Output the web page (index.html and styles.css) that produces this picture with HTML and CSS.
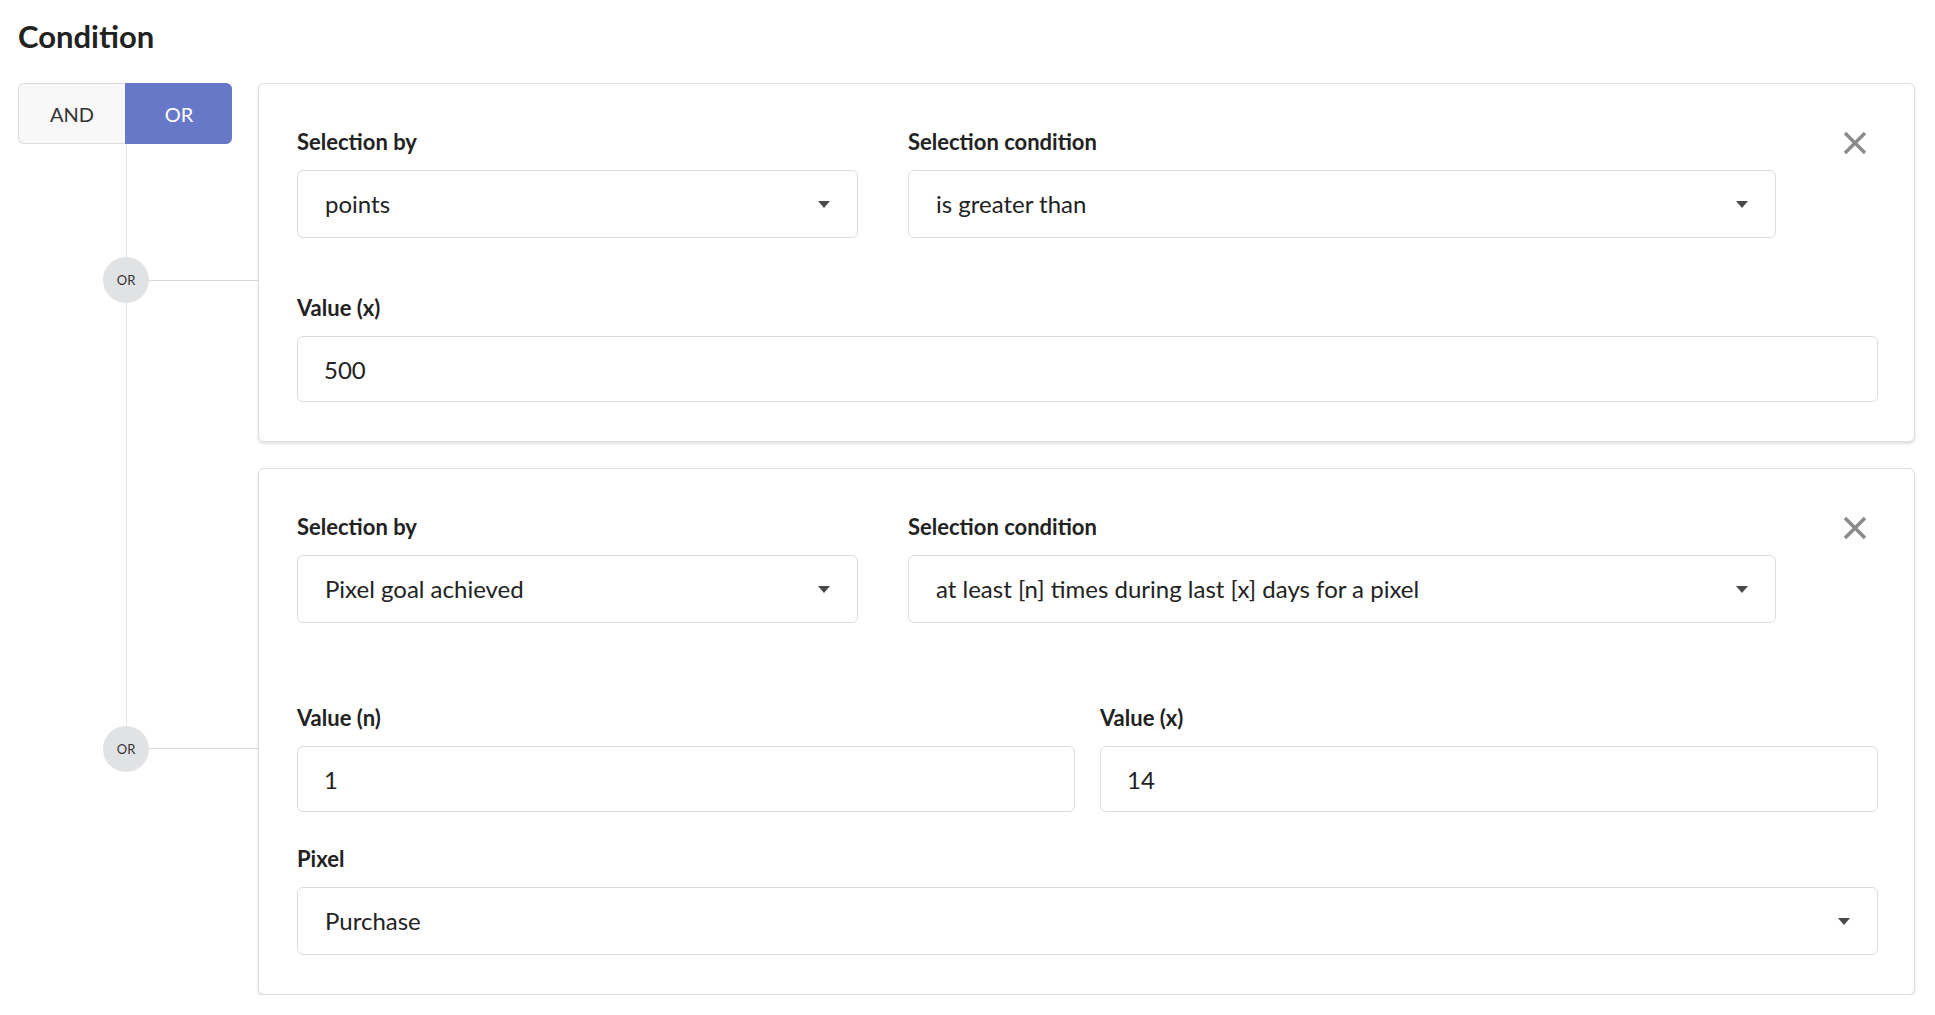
FILE: index.html
```html
<!DOCTYPE html>
<html lang="en">
<head>
  <meta charset="UTF-8">
  <title>Condition</title>
  <link rel="stylesheet" href="styles.css">
</head>
<body>

  <main class="page">
    <h1 class="title">Condition</h1>

    <div class="logic">

      <div class="item">
        <div class="rail first">
          <div class="toggle">
            <button class="toggle-btn" type="button">AND</button>
            <button class="toggle-btn active" type="button">OR</button>
          </div>
          <div class="stem"></div>
          <div class="node"><span class="node-dot">OR</span><span class="node-line"></span></div>
          <div class="stem stem-tail"></div>
        </div>

        <section class="card">
          <div class="row row-head">
            <div class="field">
              <label class="field-label">Selection by</label>
              <div class="select"><span>points</span><i class="caret"></i></div>
            </div>
            <div class="field">
              <label class="field-label">Selection condition</label>
              <div class="select"><span>is greater than</span><i class="caret"></i></div>
            </div>
            <button class="remove" type="button" aria-label="Remove">
              <svg width="24" height="24" viewBox="0 0 24 24"><path d="M2 2 L22 22 M22 2 L2 22" stroke="#8a8a8a" stroke-width="3.4" stroke-linecap="butt"/></svg>
            </button>
          </div>
          <div class="row">
            <div class="field">
              <label class="field-label" for="value-x-1">Value (x)</label>
              <input class="input" id="value-x-1" type="text" value="500">
            </div>
          </div>
        </section>
      </div>

      <div class="item">
        <div class="rail">
          <div class="stem stem-lead"></div>
          <div class="node"><span class="node-dot">OR</span><span class="node-line"></span></div>
          <div class="rail-rest"></div>
        </div>

        <section class="card">
          <div class="row row-head row-spaced">
            <div class="field">
              <label class="field-label">Selection by</label>
              <div class="select"><span>Pixel goal achieved</span><i class="caret"></i></div>
            </div>
            <div class="field">
              <label class="field-label">Selection condition</label>
              <div class="select"><span>at least [n] times during last [x] days for a pixel</span><i class="caret"></i></div>
            </div>
            <button class="remove" type="button" aria-label="Remove">
              <svg width="24" height="24" viewBox="0 0 24 24"><path d="M2 2 L22 22 M22 2 L2 22" stroke="#8a8a8a" stroke-width="3.4" stroke-linecap="butt"/></svg>
            </button>
          </div>
          <div class="row row-pair">
            <div class="field">
              <label class="field-label" for="value-n-2">Value (n)</label>
              <input class="input" id="value-n-2" type="text" value="1">
            </div>
            <div class="field">
              <label class="field-label" for="value-x-2">Value (x)</label>
              <input class="input" id="value-x-2" type="text" value="14">
            </div>
          </div>
          <div class="row">
            <div class="field">
              <label class="field-label">Pixel</label>
              <div class="select"><span>Purchase</span><i class="caret"></i></div>
            </div>
          </div>
        </section>
      </div>

    </div>
  </main>

</body>
</html>
```

FILE: styles.css
```css
body {
  margin: 0;
  font-family: Lato, "Noto Sans", sans-serif;
  color: #222;
  background: #fff;
}
.page {
  padding: 18px 20px 0 18px;
}
.title {
  margin: 0 0 29px;
  font-size: 31px;
  line-height: 36px;
  font-weight: 700;
  color: #222;
}

/* left rail with AND / OR switch and connectors */
.item {
  display: flex;
  align-items: stretch;
}
.rail {
  width: 240px;
  flex: none;
  display: flex;
  flex-direction: column;
}
.toggle {
  display: flex;
  width: 214px;
  height: 61px;
  flex: none;
}
.toggle-btn {
  flex: 1;
  font-family: inherit;
  font-size: 20px;
  color: #333;
  background: #f8f8f8;
  border: 1px solid #dcdcdc;
  border-right: none;
  border-radius: 6px 0 0 6px;
  padding: 0;
}
.toggle-btn.active {
  color: #fff;
  background: #6878c8;
  border-color: #6878c8;
  border-radius: 0 6px 6px 0;
}
.stem {
  width: 1px;
  margin-left: 108px;
  background: #e2e2e2;
  flex: 1 1 0;
}
.rail.first .stem-tail {
  flex-basis: 52px;
}
.stem-lead {
  flex-basis: 34px;
}
.rail-rest {
  flex: 1 1 0;
}
.node {
  display: flex;
  align-items: center;
  height: 46px;
  flex: none;
}
.node-dot {
  width: 46px;
  height: 46px;
  margin-left: 85px;
  border-radius: 50%;
  background: #e1e2e4;
  color: #333;
  font-size: 13px;
  display: flex;
  align-items: center;
  justify-content: center;
  flex: none;
}
.node-line {
  flex: 1;
  height: 1px;
  background: #d9d9d9;
}

/* condition cards */
.card {
  flex: 1;
  background: #fff;
  border: 1px solid #dedede;
  border-radius: 6px;
  box-shadow: 0 2px 3px rgba(0, 0, 0, 0.12);
  padding: 46px 36px 39px 38px;
}
.item:not(:last-child) .card {
  margin-bottom: 26px;
}
.row {
  margin-bottom: 35px;
}
.row:last-child {
  margin-bottom: 0;
}
.row-head {
  display: grid;
  grid-template-columns: 561fr 868fr 52px;
  column-gap: 50px;
  margin-bottom: 58px;
}
.row-head.row-spaced {
  margin-bottom: 83px;
}
.row-pair {
  display: grid;
  grid-template-columns: 1fr 1fr;
  column-gap: 25px;
}
.field-label {
  display: block;
  font-size: 22px;
  line-height: 24px;
  font-weight: 700;
  color: #222;
  margin-bottom: 16px;
}
.select {
  height: 68px;
  box-sizing: border-box;
  border: 1px solid #dcdcdc;
  border-radius: 6px;
  padding: 0 27px 2px 27px;
  display: flex;
  align-items: center;
  justify-content: space-between;
  font-size: 24px;
  color: #222;
}
.caret {
  width: 0;
  height: 0;
  border-left: 6px solid transparent;
  border-right: 6px solid transparent;
  border-top: 7px solid #4a4a4a;
  margin-top: 2px;
}
.input {
  display: block;
  width: 100%;
  height: 66px;
  box-sizing: border-box;
  border: 1px solid #dcdcdc;
  border-radius: 6px;
  padding: 0 26px;
  font-family: inherit;
  font-size: 24px;
  color: #222;
  outline: none;
}
.remove {
  justify-self: end;
  align-self: start;
  margin: 1px 11px 0 0;
  padding: 0;
  border: none;
  background: none;
  width: 24px;
  height: 24px;
}
.remove svg {
  display: block;
}
```
